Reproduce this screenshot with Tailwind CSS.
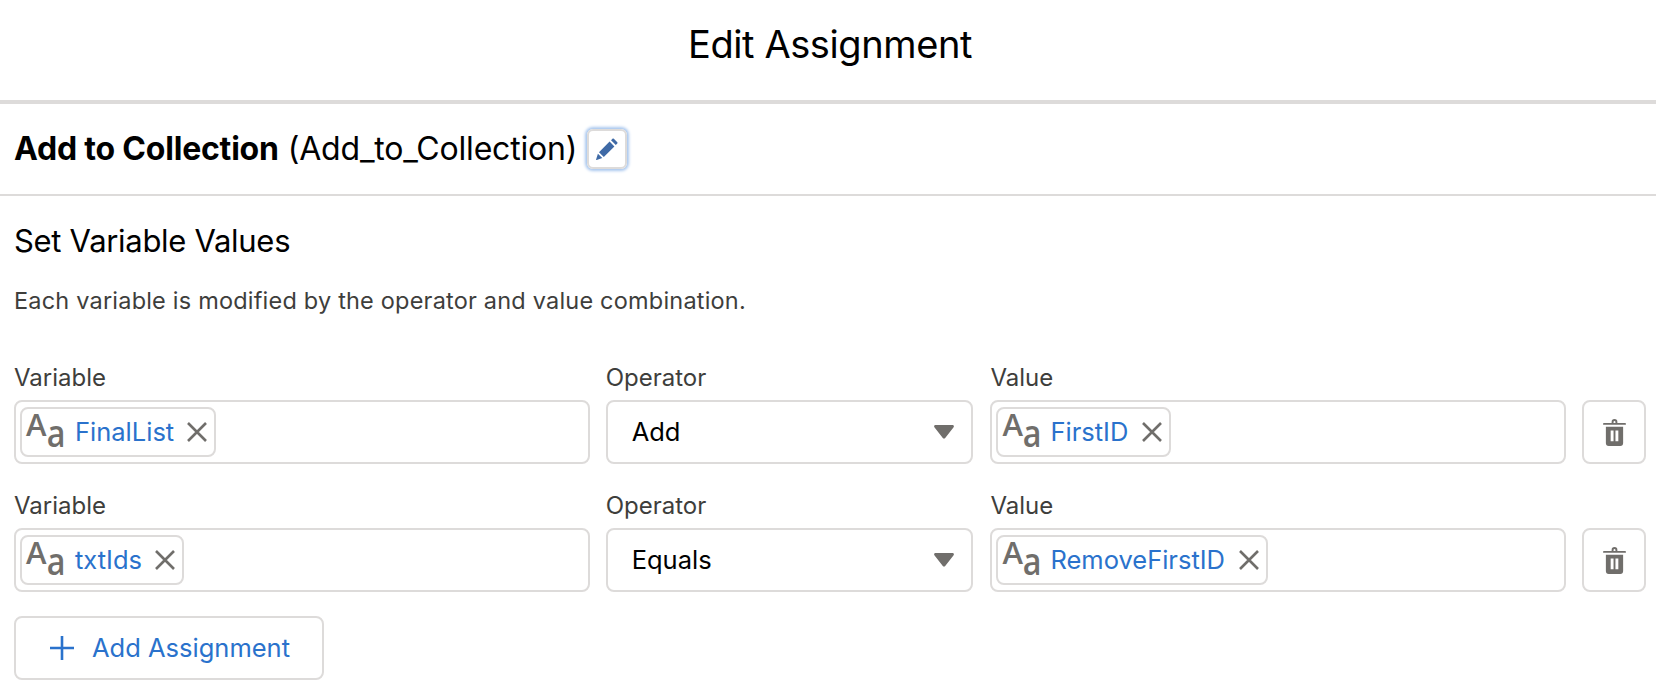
<!DOCTYPE html>
<html lang="en">
<head>
    <meta charset="utf-8">
    <title>Edit Assignment</title>
    <script src="https://cdn.jsdelivr.net/npm/@tailwindcss/browser@4"></script>
</head>
<body class="bg-white h-[698px] overflow-hidden font-['Inter',sans-serif] text-black">
    <!-- Header -->
    <div class="h-[100px] flex items-center justify-center pb-[11px] pl-[4px] text-[38px] tracking-[-0.4px]">Edit Assignment</div>
    <div class="h-[4px] bg-[#dddbda]"></div>

    <!-- Element name -->
    <div class="h-[90px] flex items-center pl-[14px] text-[32px] tracking-[-0.2px]">
        <span class="font-bold">Add to Collection</span>
        <span class="ml-[9px]">(Add_to_Collection)</span>
        <button class="ml-[10px] w-[40px] h-[40px] rounded-[6px] border-2 border-[#dddbda] shadow-[0_0_3px_2px_#a9c7ee] flex items-center justify-center">
            <svg viewBox="0 0 24 24" class="w-[24px] h-[24px]" fill="#3f6aa6">
                <path d="M18.800 1.700 22.300 5.200c.4.4.4.9 0 1.300L20.800 8 16 3.200l1.500-1.500c.4-.4.9-.4 1.300 0zM14.600 4.600 19.400 9.400 8.800 20 4 15.200zM2.900 16.700 7.300 21.100 1.700 23c-.4.100-.7-.2-.6-.6z"/>
            </svg>
        </button>
    </div>
    <div class="h-[2px] bg-[#dddbda]"></div>

    <div class="pl-[14px] pr-[10px]">
        <h2 class="text-[31px] tracking-[-0.3px] leading-[36px] mt-[27px]">Set Variable Values</h2>
        <p class="text-[23.500px] leading-[28px] text-[#3e3e3c] mt-[28px] tracking-[0.2px]">Each variable is modified by the operator and value combination.</p>

        <div class="mt-[49px] flex flex-col gap-[28px]">
            <!-- Row 1 -->
            <div class="flex items-end">
                <div class="w-[576px]">
                    <div class="text-[24px] leading-[28px] text-[#3e3e3c] h-[36px]">Variable</div>
                    <div class="h-[64px] border-2 border-[#dddbda] rounded-[8px] px-[4px] flex items-center">
                        <div class="h-[50px] border-2 border-[#dddbda] rounded-[8px] flex items-center pl-[4px] pr-[7px]">
                            <span class="w-[42px] h-[46px] relative text-[#706e6b] font-['Open_Sans',sans-serif] leading-none shrink-0">
                                <span class="absolute left-0 top-0 text-[31px] font-semibold">A</span>
                                <span class="absolute left-[19px] top-[4px] text-[38px] font-semibold scale-x-[.85]">a</span>
                            </span>
                            <span class="ml-[7px] text-[25.500px] text-[#2a72cc]">FinalList</span>
                            <svg viewBox="0 0 20 20" class="ml-[13px] w-[20px] h-[20px]" stroke="#706e6b" stroke-width="2.600" fill="none"><path d="M1 1l18 18M19 1 1 19"/></svg>
                        </div>
                    </div>
                </div>
                <div class="w-[368px] ml-[16px]">
                    <div class="text-[24px] leading-[28px] text-[#3e3e3c] h-[36px]">Operator</div>
                    <div class="h-[64px] border-2 border-[#dddbda] rounded-[8px] pl-[24px] pr-[17px] flex items-center justify-between text-[25.500px]">
                        <span>Add</span>
                        <svg viewBox="0 0 20 14" class="w-[20px] h-[14px]" fill="#706e6b"><path d="M1.500 0h17c1.200 0 1.800 1.300 1.100 2.200L11.200 13c-.6.800-1.800.8-2.400 0L.4 2.200C-.3 1.300.3 0 1.500 0z"/></svg>
                    </div>
                </div>
                <div class="w-[576px] ml-[17px]">
                    <div class="text-[24px] leading-[28px] text-[#3e3e3c] h-[36px]">Value</div>
                    <div class="h-[64px] border-2 border-[#dddbda] rounded-[8px] px-[4px] flex items-center">
                        <div class="h-[50px] border-2 border-[#dddbda] rounded-[8px] flex items-center pl-[4px] pr-[7px]">
                            <span class="w-[42px] h-[46px] relative text-[#706e6b] font-['Open_Sans',sans-serif] leading-none shrink-0">
                                <span class="absolute left-0 top-0 text-[31px] font-semibold">A</span>
                                <span class="absolute left-[19px] top-[4px] text-[38px] font-semibold scale-x-[.85]">a</span>
                            </span>
                            <span class="ml-[6px] text-[25.500px] text-[#2a72cc]">FirstID</span>
                            <svg viewBox="0 0 20 20" class="ml-[14px] w-[20px] h-[20px]" stroke="#706e6b" stroke-width="2.600" fill="none"><path d="M1 1l18 18M19 1 1 19"/></svg>
                        </div>
                    </div>
                </div>
                <button class="w-[64px] h-[64px] ml-[16px] border-2 border-[#dddbda] rounded-[8px] flex items-center justify-center">
                    <svg viewBox="0 0 24 28" class="w-[23px] h-[27px]" fill="#706e6b"><path fill-rule="evenodd" d="M9 4V3a3 3 0 0 1 6 0v1h8a1 1 0 0 1 0 2H1a1 1 0 0 1 0-2zm2 0h2V3a1 1 0 0 0-2 0zM3 8h18v17a3 3 0 0 1-3 3H6a3 3 0 0 1-3-3zm5 4v11h3V12zm5 0v11h3V12z"/></svg>
                </button>
            </div>

            <!-- Row 2 -->
            <div class="flex items-end">
                <div class="w-[576px]">
                    <div class="text-[24px] leading-[28px] text-[#3e3e3c] h-[36px]">Variable</div>
                    <div class="h-[64px] border-2 border-[#dddbda] rounded-[8px] px-[4px] flex items-center">
                        <div class="h-[50px] border-2 border-[#dddbda] rounded-[8px] flex items-center pl-[4px] pr-[7px]">
                            <span class="w-[42px] h-[46px] relative text-[#706e6b] font-['Open_Sans',sans-serif] leading-none shrink-0">
                                <span class="absolute left-0 top-0 text-[31px] font-semibold">A</span>
                                <span class="absolute left-[19px] top-[4px] text-[38px] font-semibold scale-x-[.85]">a</span>
                            </span>
                            <span class="ml-[7px] text-[25.500px] text-[#2a72cc]">txtIds</span>
                            <svg viewBox="0 0 20 20" class="ml-[13px] w-[20px] h-[20px]" stroke="#706e6b" stroke-width="2.600" fill="none"><path d="M1 1l18 18M19 1 1 19"/></svg>
                        </div>
                    </div>
                </div>
                <div class="w-[368px] ml-[16px]">
                    <div class="text-[24px] leading-[28px] text-[#3e3e3c] h-[36px]">Operator</div>
                    <div class="h-[64px] border-2 border-[#dddbda] rounded-[8px] pl-[24px] pr-[17px] flex items-center justify-between text-[25.500px]">
                        <span>Equals</span>
                        <svg viewBox="0 0 20 14" class="w-[20px] h-[14px]" fill="#706e6b"><path d="M1.500 0h17c1.200 0 1.800 1.300 1.100 2.200L11.200 13c-.6.800-1.800.8-2.400 0L.4 2.200C-.3 1.300.3 0 1.500 0z"/></svg>
                    </div>
                </div>
                <div class="w-[576px] ml-[17px]">
                    <div class="text-[24px] leading-[28px] text-[#3e3e3c] h-[36px]">Value</div>
                    <div class="h-[64px] border-2 border-[#dddbda] rounded-[8px] px-[4px] flex items-center">
                        <div class="h-[50px] border-2 border-[#dddbda] rounded-[8px] flex items-center pl-[4px] pr-[7px]">
                            <span class="w-[42px] h-[46px] relative text-[#706e6b] font-['Open_Sans',sans-serif] leading-none shrink-0">
                                <span class="absolute left-0 top-0 text-[31px] font-semibold">A</span>
                                <span class="absolute left-[19px] top-[4px] text-[38px] font-semibold scale-x-[.85]">a</span>
                            </span>
                            <span class="ml-[6px] text-[25.500px] text-[#2a72cc]">RemoveFirstID</span>
                            <svg viewBox="0 0 20 20" class="ml-[14px] w-[20px] h-[20px]" stroke="#706e6b" stroke-width="2.600" fill="none"><path d="M1 1l18 18M19 1 1 19"/></svg>
                        </div>
                    </div>
                </div>
                <button class="w-[64px] h-[64px] ml-[16px] border-2 border-[#dddbda] rounded-[8px] flex items-center justify-center">
                    <svg viewBox="0 0 24 28" class="w-[23px] h-[27px]" fill="#706e6b"><path fill-rule="evenodd" d="M9 4V3a3 3 0 0 1 6 0v1h8a1 1 0 0 1 0 2H1a1 1 0 0 1 0-2zm2 0h2V3a1 1 0 0 0-2 0zM3 8h18v17a3 3 0 0 1-3 3H6a3 3 0 0 1-3-3zm5 4v11h3V12zm5 0v11h3V12z"/></svg>
                </button>
            </div>
        </div>

        <button class="mt-[24px] w-[310px] h-[64px] border-2 border-[#dddbda] rounded-[8px] flex items-center pl-[34px] text-[25.500px] text-[#2a72cc]">
            <svg viewBox="0 0 24 24" class="w-[24px] h-[24px]" stroke="#2a72cc" stroke-width="2.600" fill="none"><path d="M12 0v24M0 12h24"/></svg>
            <span class="ml-[18px]">Add Assignment</span>
        </button>
    </div>
</body>
</html>
